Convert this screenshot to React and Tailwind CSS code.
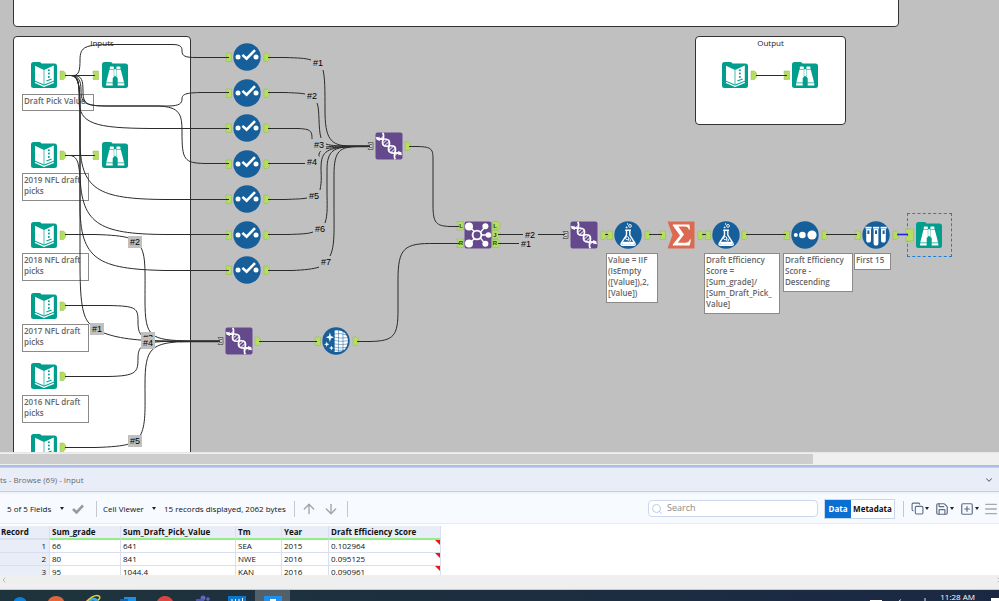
import React from "react";
import { ArrowDown, ArrowUp, ChevronDown, ChevronLeft, ChevronRight, Copy, Menu, Save, Search, SquarePlus } from "lucide-react";

const TEAL = "#019e8e";
const BLUE = "#175f9b";
const PURPLE = "#644a8c";

function Folder({ children }) {
  return (
    <svg viewBox="0 0 28 28" className="size-7">
      <path d="M1 3.5Q1 1 3.5 1H9.5Q11 1 11.5 2.5H24.5Q27 2.5 27 5V24.5Q27 27 24.5 27H3.5Q1 27 1 24.5Z" fill={TEAL} />
      {children}
    </svg>
  );
}

function InputIcon() {
  return (
    <Folder>
      <path d="M5 4.8L14 9V23.4L5 19.8Z" fill="#fff" />
      <path d="M14 9L23.8 4.6V19.8L14 23.4Z" fill="#fff" />
      <path d="M14 9V23" stroke={TEAL} strokeWidth="0.7" />
      <path d="M5 21.4L14 25.4L23.8 21.4" fill="none" stroke="#fff" strokeWidth="1.2" />
      <path d="M16.4 20L21.6 18" stroke={TEAL} strokeWidth="1.1" />
      <circle cx="18.9" cy="9.2" r="1" fill={TEAL} />
      <circle cx="18.9" cy="12.6" r="1" fill={TEAL} />
      <circle cx="18.9" cy="16" r="1" fill={TEAL} />
    </Folder>
  );
}

function BrowseIcon() {
  return (
    <Folder>
      <g fill="#fff">
        <rect x="8.8" y="5.6" width="4" height="2.6" rx="0.5" />
        <rect x="15.4" y="5.6" width="4" height="2.6" rx="0.5" />
        <path d="M8.4 8.8H12.8V21.5H5.3Z" />
        <path d="M15.4 8.8H19.8L23.1 21.5H15.4Z" />
        <rect x="13.2" y="8.2" width="1.8" height="7" />
        <path d="M5.1 22.3H12.5V24.4H5.1ZM15.9 22.3H23.3V24.4H15.9Z" />
      </g>
      <path d="M11.7 17Q14.2 14.6 16.7 17V26H11.7Z" fill={TEAL} />
    </Folder>
  );
}

function Round({ children }) {
  return (
    <svg viewBox="0 0 28 28" className="size-7">
      <circle cx="14" cy="14" r="13.7" fill={BLUE} />
      {children}
    </svg>
  );
}

function SelectIcon() {
  return (
    <Round>
      <circle cx="5" cy="14" r="2.5" fill="#fff" />
      <circle cx="23" cy="14" r="2.5" fill="#fff" />
      <path d="M9.4 11.9L13.6 15.7L22 7.2" fill="none" stroke="#fff" strokeWidth="2.6" />
    </Round>
  );
}

function FormulaIcon() {
  return (
    <Round>
      <path d="M11.2 9.2H17M12.5 9.2V14L7.2 22.4Q6.4 24.3 8.6 24.3H19.6Q21.8 24.3 21 22.4L15.8 14V9.2" fill="none" stroke="#fff" strokeWidth="1.4" />
      <path d="M8 21.6L9.2 20.8H19.2L20.3 21.6L19.8 23.8H8.4Z" fill="#fff" />
      <circle cx="13.2" cy="17.2" r="1.6" fill="none" stroke="#fff" />
      <circle cx="15.6" cy="19" r="1.1" fill="none" stroke="#fff" strokeWidth="0.8" />
      <circle cx="12.6" cy="6.4" r="0.9" fill="#fff" />
      <circle cx="16" cy="4.9" r="1.4" fill="none" stroke="#fff" strokeWidth="0.9" />
      <circle cx="13.6" cy="3" r="0.7" fill="#fff" />
    </Round>
  );
}

function SortIcon() {
  return (
    <Round>
      <circle cx="4.8" cy="14" r="2" fill="#fff" />
      <circle cx="11.4" cy="14" r="3.3" fill="#fff" />
      <circle cx="21" cy="14" r="4.6" fill="#fff" />
    </Round>
  );
}

const tubes = [
  [3.4, "M4.2 8H9V19Q9 21.6 6.6 21.6Q4.2 21.6 4.2 19Z"],
  [11, "M11.6 8H16.4V22Q16.4 24.6 14 24.6Q11.6 24.6 11.6 22Z"],
  [18.6, "M19 8H23.8V19Q23.8 21.6 21.4 21.6Q19 21.6 19 19Z"],
];

function SampleIcon() {
  return (
    <Round>
      {tubes.map(([x, d]) => (
        <g key={x} fill="#fff">
          <rect x={x} y="5.8" width="6.2" height="1.8" />
          <path d={d} />
          <rect x={x + 2} y="9.4" width="2" height="3.6" fill={BLUE} />
        </g>
      ))}
    </Round>
  );
}

function CleanseIcon() {
  return (
    <Round>
      <path d="M12.6 3.6Q19 2.6 23 6Q25.6 9 26 14Q25.6 19.4 22.8 22.4Q19 25.4 12.6 25Z" fill="#fff" />
      <path d="M12 7Q18 5.6 25 8M12 10Q18 12 26 10.6M12 13.4Q18 15.2 27 13.6M12 16.8Q18 18.2 26 17M12 20Q18 21.6 25 20.4M12 22.8Q17 23.8 22 23M16.5 3V25.4M21 4V24" fill="none" stroke={BLUE} strokeWidth="0.5" />
      <path d="M7.9 5.4L8.9 9L12 10.2L8.9 11.4L7.9 15L6.9 11.4L3.8 10.2L6.9 9ZM4.7 14.4L5.4 16.5L7.4 17.2L5.4 17.9L4.7 20L4 17.9L2 17.2L4 16.5ZM9.4 18.4L10 20.3L11.8 21L10 21.7L9.4 23.6L8.8 21.7L7 21L8.8 20.3Z" fill="#fff" />
    </Round>
  );
}

function Square({ children }) {
  return (
    <svg viewBox="0 0 28 28" className="size-7">
      <rect x="0.5" y="0.5" width="27" height="27" rx="2" fill={PURPLE} />
      {children}
    </svg>
  );
}

function UnionIcon() {
  return (
    <Square>
      <g transform="rotate(48 14 14)" fill="none" stroke="#fff">
        <path d="M-1 17.6C4 18.4 5 10.4 9.5 10.4C14 10.4 14 17.6 18.5 17.6C23 17.6 23 11 29 10.4" strokeWidth="1.7" />
        <path d="M0 10C5 10 5 17.6 9.5 17.6C14 17.6 14 10.4 18.500 10.4C23 10.4 23 18 28 18" strokeWidth="1.7" />
        <path d="M8 11.5V16.5M10.8 11V17M17.2 11V17M20 11.5V16.5M3 11.5V16.500M25 11.5V16.5" strokeWidth="0.9" />
      </g>
      <path d="M1.2 7.6L4.4 4.6L5 9ZM26.8 20.4L23.6 23.4L23 19Z" fill="#fff" />
    </Square>
  );
}

function JoinIcon() {
  return (
    <Square>
      <path d="M5 5.4L14 14L21.6 5.2M5 23L14 14L21.6 23.4M14 14H24" stroke="#fff" strokeWidth="1.4" fill="none" />
      <circle cx="13" cy="14" r="4.4" fill={PURPLE} stroke="#fff" strokeWidth="1.9" />
      <circle cx="5" cy="5.4" r="4" fill="#fff" />
      <circle cx="5" cy="22.6" r="4" fill="#fff" />
      <circle cx="21.4" cy="5.2" r="3" fill="#fff" />
      <circle cx="24.4" cy="14" r="2.8" fill="#fff" />
      <circle cx="21.4" cy="22.8" r="3" fill="#fff" />
    </Square>
  );
}

function SummarizeIcon() {
  return (
    <svg viewBox="0 0 28 28" className="size-7">
      <path d="M0.5 0.5H27.5V27.5H0.5L5.5 14Z" fill="#dc6a51" />
      <path d="M5.8 3.4H22.4L23 8.6H21.8Q21.2 5.6 18 5.6H11.4L17 13.4L10.8 21.8H18.4Q21.8 21.8 22.8 18.6H24L22.6 24.6H5.8V23.6L13 14.4L5.8 4.6Z" fill="#fff" />
    </svg>
  );
}

const tools = [
  [44, 75, InputIcon], [115, 75, BrowseIcon], [44, 155, InputIcon], [115, 155, BrowseIcon],
  [44, 235, InputIcon], [44, 306, InputIcon], [44, 376, InputIcon], [44, 447, InputIcon],
  [735, 75, InputIcon], [805, 75, BrowseIcon],
  [247, 57, SelectIcon], [247, 93, SelectIcon], [247, 128, SelectIcon], [247, 164, SelectIcon],
  [247, 199, SelectIcon], [247, 235, SelectIcon], [247, 270, SelectIcon],
  [389, 146, UnionIcon], [239, 341, UnionIcon], [336, 341, CleanseIcon],
  [478, 235, JoinIcon], [584, 235, UnionIcon], [628, 235, FormulaIcon], [681, 235, SummarizeIcon],
  [726, 235, FormulaIcon], [805, 235, SortIcon], [876, 235, SampleIcon], [929, 235, BrowseIcon],
];

const notes = [
  [22, 94, 72, "Draft Pick Value"],
  [22, 173, 67, "2019 NFL draft picks"],
  [22, 253, 67, "2018 NFL draft picks"],
  [22, 324, 67, "2017 NFL draft picks"],
  [22, 395, 67, "2016 NFL draft picks"],
  [606, 253, 52, "Value = IIF\n(IsEmpty\n([Value]),2,\n[Value])"],
  [704, 253, 76, "Draft Efficiency\nScore =\n[Sum_grade]/\n[Sum_Draft_Pick_\nValue]"],
  [783, 253, 70, "Draft Efficiency\nScore -\nDescending"],
  [854, 253, 37, "First 15"],
];

const outputs = [
  [60, 75], [60, 155], [60, 235], [60, 306], [60, 376], [60, 447], [751, 75],
  [264, 57], [264, 93], [264, 128], [264, 164], [264, 199], [264, 235], [264, 270],
  [405, 146], [255, 341], [353, 341], [601, 235], [645, 235], [698, 235], [742, 235], [822, 235], [893, 235],
];
const inputs = [
  [93, 75], [93, 155], [784, 75],
  [226, 57], [226, 93], [226, 128], [226, 164], [226, 199], [226, 235], [226, 270],
  [315, 341], [607, 235], [660, 235], [705, 235], [784, 235], [855, 235],
];
const multi = [[368, 146], [218, 341], [563, 235]];

const wires = [
  // input fan-out
  "M65 75.5H95", "M65 155.5H95", "M756 75.5H787",
  "M65 75.5H74C79 75 80 70 80 60C80 46 86 45 110 44.5H172C181 44.5 182 47 182 51C182 56 185 57.5 196 57.5H229",
  "M65 75.5H74C82 76 83 80 83 92C83 105 88 106 110 106H168C180 106 182 103 182 99C182 94 186 93 200 92.5H229",
  "M65 75.5H72C78 76 81 80 81 90C81 104 85 106 110 106H158C180 107 182 114 182 132C182 160 184 163 205 163.5H229",
  "M65 75.5H72C79 76 79 84 79 100C79 124 95 128 150 128.5H229",
  "M65 75.5H71C80 76 80 90 80 120V140C80 190 98 199 165 199.5H229",
  "M65 75.5H71C80 76 80 90 80 120V170C80 224 98 234 165 234.5H229",
  "M65 75.5H71C80 76 80 90 80 120V205C80 260 98 269 165 270.5H229",
  "M65 155.5H70C79 156 80 168 80 190V262C80 300 82 318 91 325M104 333C120 339 140 341 180 341.5H220",
  "M65 234.5H95C112 235 122 236 129 238M140 246C146 255 145 270 145 300C145 338 150 340 190 341H220",
  "M65 305.5H108C137 306 138 308 138 322C138 334 141 340 160 341H220",
  "M65 376.5H108C137 376 138 372 138 358C138 348 141 342 165 341.5H220",
  "M65 447.5H95C112 447 122 446 129 444M140 436C146 425 145 410 145 385C145 348 150 342 190 341.5H220",
  // lanes into the first union
  "M268 57.5H285C298 58 305 58 311 60M323 70C325 78 325 90 325 110C325 138 330 146 350 146H370",
  "M268 92.5H285C295 93 300 93 305 94M317 103C320 110 318 128 321 138M326 144C332 146 340 146 350 146H370",
  "M268 128.5H298C311 129 312 131 312 139M326 147C334 146 340 146 350 146.5H370",
  "M268 163.5H305M319 157C318 148 326 148 350 146.5H370",
  "M268 199.5H285C296 199 302 199 307 198M320 190C322 180 321 175 321 168C321 150 328 148 352 146.5H370",
  "M268 234.5H288C300 234 308 234 313 232M325 223C328 214 327 205 327 190V170C327 150 334 147 354 146.5H370",
  "M268 270.5H292C304 270 314 269 319 267M330 256C335 246 334 230 334 205V175C334 150 340 147 358 146.5H370",
  "M409 146.5H418C432 147 433 149 433 160V205C433 223 436 226 450 226.5H459",
  "M259 341.5H317", "M357 341.5H370C394 341 398 336 398 310V280C398 248 404 243 435 243.5H459",
  "M498 234.5H524M538 234.5H565", "M498 243.5H520",
  "M605 234.5H608", "M649 234.5H662", "M702 234.5H706", "M746 234.5H786", "M826 234.5H857",
];

function Wires() {
  return (
    <svg viewBox="0 0 999 452" className="pointer-events-none absolute left-0 top-0 h-[452px] w-[999px]">
      <g fill="#b5dd62" stroke="#94b955" strokeWidth="0.5">
        {outputs.map(([x, y]) => <path key={x + "-" + y} d={`M${x} ${y - 4}h3.5l2 2v4l-2 2.5h-3.5z`} />)}
        {inputs.map(([x, y]) => <path key={x + "-" + y} d={`M${x} ${y - 4}h5.5v8.5h-5.5v-2.5l2-1.5l-2-1.5z`} />)}
        <path d="M905.5 229H913.5V241H905.5V238L908.5 235L905.5 232Z" />
        <path d="M456.5 221.5H463.5V230H456.5L458.5 225.5ZM456.5 239H463.5V247.5H456.5L458.5 243.5Z" />
        <path d="M492.5 221.5H498L500 223.5V227.5L498 229.5H492.5ZM492.5 230.5H498L500 232.5V236.5L498 238.5H492.5ZM492.5 239.5H498L500 241.5V245.5L498 247.5H492.5Z" />
      </g>
      <g fill="#c9c9c9" stroke="#555" strokeWidth="0.8">
        {multi.map(([x, y]) => <path key={x} d={`M${x} ${y - 3.5}h5v7h-5l1.5-2l-1.5-1.5l1.5-1.5zM${x + 2} ${y - 1.5}h2M${x + 2} ${y + 1.5}h2`} />)}
      </g>
      <g fill="none" stroke="#2b2b2b" strokeWidth="1">
        {wires.map((d) => <path key={d} d={d} />)}
        <path d="M180 341.5H218M345 146.5H368" strokeWidth="1.6" />
        <path d="M897 234.5H908" stroke="#2222e6" strokeWidth="1.6" />
      </g>
      <g fill="#1f4420" className="font-['Liberation_Sans',sans-serif] text-[6px] font-bold" textAnchor="middle">
        <text x="461" y="228">L</text>
        <text x="461" y="245">R</text>
        <text x="495" y="228">L</text>
        <text x="495" y="237">J</text>
        <text x="495" y="245">R</text>
      </g>
    </svg>
  );
}

// order numbers of the wires, by centre point
const marks = [
  [318, 63, "#1"], [312, 96, "#2"], [319, 145, "#3"], [312, 162, "#4"], [314, 196, "#5"], [320, 229, "#6"], [326, 262, "#7"],
  [135, 242, "#2"], [97, 329, "#1"], [148, 338, "#3"], [148, 343, "#4"], [135, 441, "#5"], [526, 244, "#1"], [530, 235, "#2"],
];

function Canvas() {
  return (
    <main className="relative min-h-0 flex-1 overflow-hidden bg-[#c0c0c0]">
      <section className="absolute -top-1 left-[13px] h-[31px] w-[886px] rounded-sm border border-[#333] bg-white" />
      <section className="absolute left-[13px] top-9 h-[440px] w-[178px] rounded-sm border border-[#333] bg-white text-center">
        <h2 className="text-[8px] leading-3">Inputs</h2>
      </section>
      <section className="absolute left-[695px] top-9 h-[89px] w-[151px] rounded-sm border border-[#333] bg-white text-center">
        <h2 className="text-[8px] leading-3">Output</h2>
      </section>
      {notes.map(([left, top, width, text]) => (
        <p key={text} style={{ left, top, width }} className="absolute whitespace-pre-wrap border border-[#8a8a8a] bg-white px-px pb-1 text-[8px] font-semibold leading-[11px] text-[#666]">
          {text}
        </p>
      ))}
      <div className="absolute left-[907px] top-[213px] h-[44px] w-[45px] border border-dashed border-[#1e7fd6]" />
      {tools.map(([x, y, Icon]) => (
        <div key={x + "-" + y} style={{ left: x - 14, top: y - 14 }} className="absolute size-7">
          <Icon />
        </div>
      ))}
      <Wires />
      {marks.map(([x, y, text]) => (
        <span key={x + "-" + y} style={{ left: x - 7, top: y - 6 }} className="absolute h-3 w-[14px] bg-[#c0c0c0] text-center font-['Liberation_Sans',sans-serif] text-[9px] leading-3 text-black">
          {text}
        </span>
      ))}
    </main>
  );
}

function Caret() {
  return (
    <svg viewBox="0 0 4 3" className="h-[3px] w-1 shrink-0"><path d="M0 0H4L2 3Z" fill="#222" /></svg>
  );
}

function Divider() {
  return <span className="h-4 w-px bg-[#c4c8ce]" />;
}

function Dropdown({ label, value }) {
  return (
    <label className="flex items-center gap-2">
      <select aria-label={label} className="appearance-none bg-transparent">
        <option>{value}</option>
      </select>
      <Caret />
    </label>
  );
}

const rows = [
  ["1", "66", "641", "SEA", "2015", "0.102964"],
  ["2", "80", "841", "NWE", "2016", "0.095125"],
  ["3", "95", "1044.4", "KAN", "2016", "0.090961"],
];

function Results() {
  return (
    <section className="shrink-0 bg-white text-[8px] text-[#111]">
      <header className="flex h-6 items-center justify-between border-b border-[#c9cdd6] bg-[#e9edf8] pr-[5px] text-[#666b72]">
        <h2>ts - Browse (69) - Input</h2>
        <button aria-label="Collapse"><ChevronDown className="size-[10px] text-[#5d6c84]" strokeWidth={2.5} /></button>
      </header>
      <div className="h-[2px] bg-[#eef2fb]" />
      <div className="flex h-[30px] items-center border-b border-[#e4ebf2] bg-[#f7faff] pl-[7px]">
        <Dropdown label="Fields" value="5 of 5 Fields" />
        <button aria-label="Apply" className="ml-2 mr-3">
          <svg viewBox="0 0 12 10" className="h-[10px] w-3"><path d="M1 5L4.5 8.5L11 1.5" fill="none" stroke="#9a9a9a" strokeWidth="2.6" /></svg>
        </button>
        <Divider />
        <span className="ml-1.5"><Dropdown label="Viewer" value="Cell Viewer" /></span>
        <span className="mx-2">15 records displayed, 2062 bytes</span>
        <Divider />
        <button aria-label="Previous" className="ml-1.5"><ArrowUp className="size-4 text-[#a3a3a3]" /></button>
        <button aria-label="Next" className="ml-1.5 mr-2"><ArrowDown className="size-4 text-[#a3a3a3]" /></button>
        <Divider />
        <label className="ml-auto flex h-[17px] w-[170px] items-center rounded-sm border border-[#cdd8ee] bg-white pl-0.5">
          <Search className="size-3 shrink-0 text-[#b9cbe8]" />
          <input aria-label="Search" placeholder="Search" className="ml-1 w-full bg-transparent pb-0.5 text-[9px] placeholder:text-[#8b8b8b]" />
        </label>
        <div className="ml-1.5 mr-2 flex h-5 border border-[#c8d6ec] bg-white font-bold">
          <button className="w-[26px] bg-[#0a6fd3] text-white">Data</button>
          <button className="w-[43px]">Metadata</button>
        </div>
        <Divider />
        <button aria-label="Copy" className="ml-[7px] flex items-center gap-px text-[#5d6c84]"><Copy className="size-[13px]" /><Caret /></button>
        <button aria-label="Save" className="ml-1.5 flex items-center gap-px text-[#5d6c84]"><Save className="size-[14px]" /><Caret /></button>
        <button aria-label="New window" className="ml-1.5 flex items-center gap-px text-[#5d6c84]"><SquarePlus className="size-[14px]" /><Caret /></button>
        <button aria-label="Menu" className="ml-1"><Menu className="size-4 text-[#a9a9a9]" /></button>
      </div>
      <div className="h-[51px] overflow-hidden pt-0.5">
        <table className="w-[441px] table-fixed border-separate border-spacing-0 text-left">
          <colgroup>
            <col className="w-[50px]" /><col className="w-[71px]" /><col className="w-[115px]" /><col className="w-[46px]" /><col className="w-[47px]" /><col className="w-[112px]" />
          </colgroup>
          <thead className="bg-[#e9edf8] leading-3">
            <tr>
              {["Record", "Sum_grade", "Sum_Draft_Pick_Value", "Tm", "Year", "Draft Efficiency Score"].map((h) => (
                <th key={h} className="border-b-2 border-r border-r-[#d9dfee] border-b-[#93ee86] pl-0.5 pr-0 pt-0 font-bold first:border-b-[#d9dfee] first:pl-px">{h}</th>
              ))}
            </tr>
          </thead>
          <tbody className="leading-3">
            {rows.map((r) => (
              <tr key={r[0]}>
                {r.map((c, i) => (
                  <td key={i} className="relative border-b border-r border-[#d9dfee] pl-0.5 first:bg-[#e9edf8] first:pr-[3px] first:text-right">
                    {c}
                    {i === 5 && <svg viewBox="0 0 5 5" className="absolute right-0 top-0 size-[5px]"><path d="M0 0H5V5Z" fill="#f01414" /></svg>}
                  </td>
                ))}
              </tr>
            ))}
          </tbody>
        </table>
      </div>
      <div className="flex h-[15px] items-center justify-between border-b border-[#c8ccd0] bg-[#efefef] pb-1 text-[#9a9a9a]">
        <ChevronLeft className="size-2" />
        <ChevronRight className="-mr-1 size-2" />
      </div>
    </section>
  );
}

function Taskbar() {
  return (
    <footer className="flex h-[11px] shrink-0 overflow-hidden bg-linear-to-r from-[#1e343c] to-[#1b2844]">
      <svg viewBox="0 0 300 11" className="h-[11px] w-[300px] shrink-0">
        <path d="M255 0H290V11H255Z" fill="#51606a" />
        <circle cx="20" cy="14" r="7" fill="#0d7fd9" />
        <circle cx="21" cy="15" r="4" fill="#1e343c" />
        <path d="M48 11Q50 6 57 6Q63 7 64 11Z" fill="#e2643b" />
        <circle cx="93" cy="15" r="6" fill="none" stroke="#38a9ea" strokeWidth="3" />
        <path d="M86 12Q94 4 99 6Q101 8 98 10" fill="none" stroke="#f0c92c" strokeWidth="1.5" />
        <path d="M124 7H136V11H124Z" fill="#1593e8" />
        <path d="M120 9H128V11H120Z" fill="#0b63b8" />
        <path d="M157 11Q160 6 165 6Q170 6 173 11Z" fill="#d94640" />
        <circle cx="203" cy="8" r="2.5" fill="#6266c2" />
        <circle cx="208" cy="9" r="1.7" fill="#6266c2" />
        <path d="M196 9H204V11H196Z" fill="#5054b5" />
        <path d="M228 6H246V11H228Z" fill="#0a77cf" />
        <path d="M232 9V11M235.5 9V11M239 9V11M242.5 8V11" stroke="#fff" />
        <path d="M264 6H282V11H264Z" fill="#1e8fea" />
        <path d="M270 9H276V11H270Z" fill="#fff" />
      </svg>
      <svg viewBox="0 0 70 11" className="ml-auto h-[11px] w-[70px] shrink-0">
        <path d="M0 10H12V11H0Z" fill="#fff" />
        <path d="M29 11L31 9.5M55 8V11" stroke="#dfe4ea" />
      </svg>
      <time className="mr-4 text-[8px] leading-[14px] text-white">11:28 AM</time>
      <span className="mt-2 h-1 w-2 bg-white" />
    </footer>
  );
}

export default function App() {
  return (
    <div className="flex h-screen flex-col overflow-hidden bg-[#efefef] font-['Open_Sans','Noto_Sans',sans-serif] text-[#222]">
      <Canvas />
      <div className="h-[13px] shrink-0 border-t border-[#e6e6e6] bg-[#efefef] py-px">
        <div className="h-full w-[81.4%] bg-[#cdcdcd]" />
      </div>
      <div className="h-[3px] shrink-0 border-b border-[#cfcfd4] bg-[#a9bfe6]" />
      <Results />
      <Taskbar />
    </div>
  );
}
